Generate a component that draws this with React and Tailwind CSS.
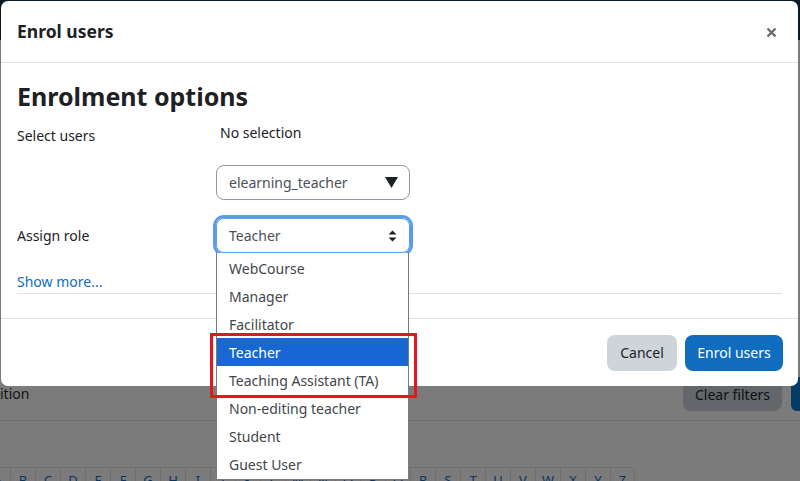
const roles = [
  'WebCourse',
  'Manager',
  'Facilitator',
  'Teacher',
  'Teaching Assistant (TA)',
  'Non-editing teacher',
  'Student',
  'Guest User',
]

const letters = 'ABCDEFGHIJKLMNOPQRSTUVWXYZ'.split('')

function PageBehind() {
  return (
    <div className="flex h-full flex-col bg-[#7b7b7b]">
      <div className="h-[40px] shrink-0 bg-[#0b1a26]" />
      <div className="h-[337px] shrink-0" />
      <div className="flex h-[34px] shrink-0 items-center justify-between">
        <span className="-mt-[2px] text-[14px] text-[#121416]">ition</span>
        <div className="flex h-full items-center">
          <div className="flex h-[34px] w-[99px] items-center justify-center rounded-[8px] bg-[#63676b] text-[14px] text-[#0e1012]">
            Clear filters
          </div>
          <div className="ml-[9px] h-[34px] w-[9px] rounded-l-[6px] bg-[#083a66]" />
        </div>
      </div>
      <div className="mt-[9px] border-t border-[#6e6e6e]" />
      <div className="mt-[46px] flex -ml-[15px]">
        {letters.map((l, i) => (
          <div
            key={l}
            className={
              'flex h-[24px] w-[25px] shrink-0 justify-center border-l border-t border-[#6e6e6e] pt-[6px] text-[13px] leading-none text-[#0a3560]' +
              (i === letters.length - 1 ? ' rounded-tr-[5px] border-r' : '')
            }
          >
            {l}
          </div>
        ))}
      </div>
    </div>
  )
}

function EnrolModal() {
  return (
    <div className="absolute left-[1px] top-[1px] flex h-[385px] w-[797px] flex-col rounded-[7px] bg-white text-[#1d2125]">
      <div className="flex h-[62px] shrink-0 items-center justify-between border-b border-[#dee2e6] pl-[16px] pr-[21px]">
        <h5 className="text-[17.5px] font-bold">Enrol users</h5>
        <svg width="11" height="11" viewBox="0 0 11 11" className="mt-[2px]">
          <path d="M1.5 1.5 L9.5 9.5 M9.5 1.5 L1.5 9.5" stroke="#6a6a6a" strokeWidth="2.4" />
        </svg>
      </div>

      <div className="flex-1 px-[16px]">
        <h2 className="mt-[18px] h-[31px] text-[25px] font-bold leading-[31px]">Enrolment options</h2>

        <div className="mt-[10px] flex">
          <div className="w-[199px] shrink-0 pt-[3px] text-[14px] leading-[22px]">Select users</div>
          <div className="flex flex-col">
            <div className="pl-[4px] text-[14px] leading-[22px]">No selection</div>
            <div className="mt-[21px] flex h-[35px] w-[194px] items-center justify-between rounded-[8px] border border-[#8f959e] pl-[12px] pr-[11px] text-[14px] text-[#495057]">
              <span>elearning_teacher</span>
              <svg width="13" height="11" viewBox="0 0 13 11">
                <path d="M0 0 H13 L6.5 11 Z" fill="#1d2125" />
              </svg>
            </div>
          </div>
        </div>

        <div className="mt-[18px] flex items-center">
          <div className="w-[199px] shrink-0 text-[14px] leading-[22px]">Assign role</div>
          <div className="flex h-[35px] w-[194px] items-center justify-between rounded-[8px] border border-[#5b9ce3] pl-[12px] pr-[12px] text-[14px] text-[#495057] ring-[3px] ring-[#5a9de4]">
            <span>Teacher</span>
            <svg width="9" height="12" viewBox="0 0 9 12">
              <path d="M4.5 0.5 L8.5 4.5 H0.5 Z M4.5 11.5 L8.5 7.5 H0.5 Z" fill="#1d2125" />
            </svg>
          </div>
        </div>

        <div className="mt-[18px] text-[14px] leading-[22px] text-[#0f6cbf]">Show more...</div>
        <div className="border-t border-[#dee2e6]" />
      </div>

      <div className="flex h-[68px] shrink-0 items-center justify-end gap-[8px] border-t border-[#dee2e6] pr-[15px]">
        <button className="h-[36px] w-[70px] rounded-[8px] bg-[#ced4da] text-[14px] text-[#1d2125]">Cancel</button>
        <button className="h-[36px] w-[98px] rounded-[8px] bg-[#0f6cbf] text-[14px] text-white">Enrol users</button>
      </div>
    </div>
  )
}

function RoleList() {
  return (
    <div className="absolute left-[216px] top-[253px] w-[193px] border border-t-0 border-[#7a7a7a] bg-white py-[1px]">
      {roles.map((r) => (
        <div
          key={r}
          className={
            'flex h-[28px] items-center px-[12px] text-[14px] ' +
            (r === 'Teacher' ? 'bg-[#1967d2] text-white' : 'text-[#41464b]')
          }
        >
          {r}
        </div>
      ))}
    </div>
  )
}

export default function App() {
  return (
    <div
      className="relative h-[481px] w-[800px] overflow-hidden"
      style={{ fontFamily: '"Noto Sans", "Open Sans", sans-serif' }}
    >
      <PageBehind />
      <EnrolModal />
      <RoleList />
      <div className="absolute left-[210px] top-[333px] h-[65px] w-[207px] border-[3px] border-[#e8141e]" />
    </div>
  )
}
